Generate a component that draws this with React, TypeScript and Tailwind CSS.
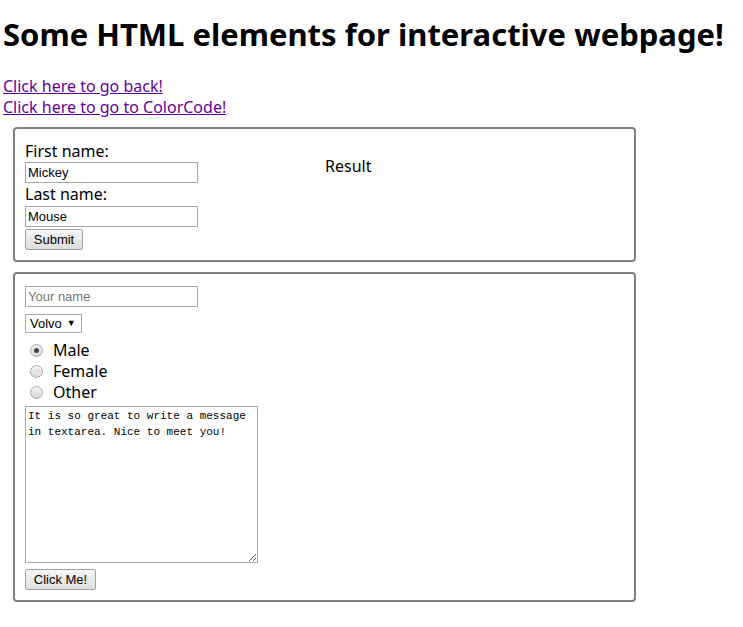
import React from 'react';

const Radio = ({ checked }: { checked?: boolean }) => (
  <span className="ml-[5px] mr-[10px] flex h-[13px] w-[13px] items-center justify-center rounded-full border border-[#a6a6a6] bg-gradient-to-b from-[#f4f4f4] to-[#d8d8d8]">
    {checked && <span className="h-[5px] w-[5px] rounded-full bg-[#444]" />}
  </span>
);

const Btn = ({ children, w, className = '' }: { children: React.ReactNode; w: string; className?: string }) => (
  <button
    className={`${w} ${className} block h-[21px] rounded-[2px] border border-[#a0a0a0] bg-gradient-to-b from-[#f6f6f6] to-[#dedede] text-[13px] text-black [font-family:'Liberation_Sans',Arial,sans-serif]`}
  >
    {children}
  </button>
);

const TextInput = ({ value, placeholder }: { value?: string; placeholder?: string }) => (
  <input
    defaultValue={value}
    placeholder={placeholder}
    className="block h-[21px] w-[173px] border border-[#a9a9a9] px-[2px] text-[13px] text-black placeholder:text-[#757575] [font-family:'Liberation_Sans',Arial,sans-serif]"
  />
);

export default function App() {
  return (
    <div className="min-h-screen bg-white px-[3px] text-black [font-family:'Noto_Sans',sans-serif]">
      <h1 className="pt-[10px] text-[31px] font-bold leading-[48px]">
        Some HTML elements for interactive webpage!
      </h1>
      <div className="mt-[18px] text-[16px] leading-[21px]">
        <a href="#" className="block w-fit text-[#660099] underline">Click here to go back!</a>
        <a href="#" className="block w-fit text-[#660099] underline">Click here to go to ColorCode!</a>
      </div>

      <div className="ml-[10px] mt-[9px] w-[623px] rounded-[4px] border-2 border-[#808080] px-[10px] pb-[10px] pt-[11px]">
        <div className="flex">
          <div className="w-[300px]">
            <div className="h-[22px] text-[16px] leading-[22px]">First name:</div>
            <TextInput value="Mickey" />
            <div className="h-[23px] text-[16px] leading-[23px]">Last name:</div>
            <TextInput value="Mouse" />
            <Btn w="w-[58px]" className="mt-[2px]">Submit</Btn>
          </div>
          <div className="pt-[16px] text-[16px] leading-[21px]">Result</div>
        </div>
      </div>

      <div className="ml-[10px] mt-[10px] w-[623px] rounded-[4px] border-2 border-[#808080] px-[10px] pb-[10px] pt-[12px]">
        <TextInput placeholder="Your name" />
        <div className="mt-[7px] flex h-[19px] w-[57px] items-center border border-[#a9a9a9] pl-[4px] text-[13px] [font-family:'Liberation_Sans',Arial,sans-serif]">
          <span>Volvo</span>
          <span className="ml-[5px] text-[9px]">▼</span>
        </div>
        <div className="mt-[7px] text-[16px] leading-[21px]">
          {[
            ['Male', true],
            ['Female', false],
            ['Other', false],
          ].map(([label, checked]) => (
            <label key={label as string} className="flex h-[21px] items-center">
              <Radio checked={checked as boolean} />
              <span>{label as string}</span>
            </label>
          ))}
        </div>
        <textarea
          defaultValue="It is so great to write a message in textarea. Nice to meet you!"
          className="mt-[3px] block h-[157px] w-[233px] resize border border-[#a9a9a9] px-[2px] py-[1px] text-[11px] leading-[16px] [font-family:'Liberation_Mono',monospace]"
        />
        <Btn w="w-[71px]" className="mt-[6px]">Click Me!</Btn>
      </div>
    </div>
  );
}
